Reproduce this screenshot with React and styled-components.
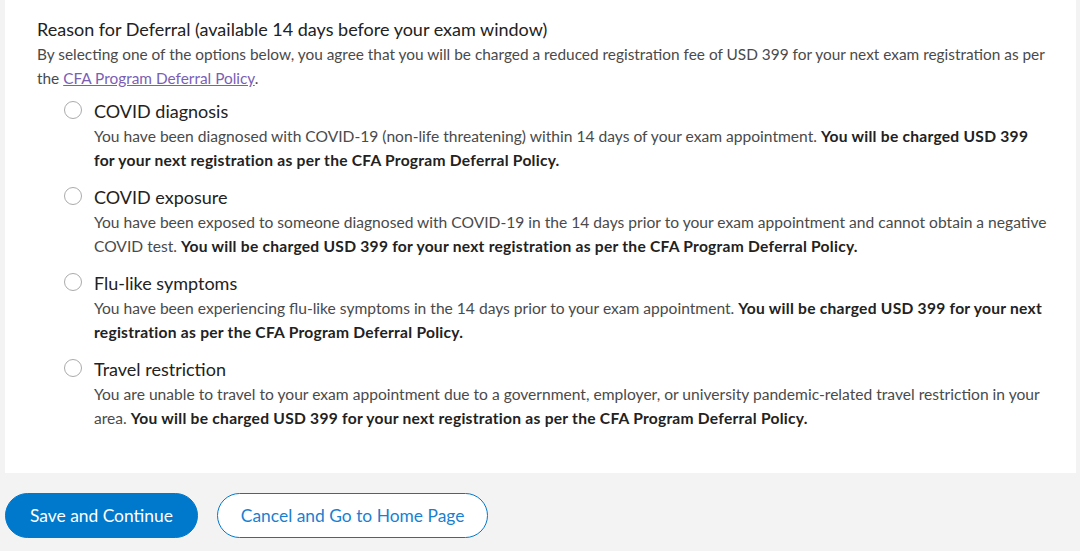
import React from "react";
import styled, { createGlobalStyle } from "styled-components";

const GlobalStyle = createGlobalStyle`
  html, body {
    margin: 0;
    padding: 0;
    background: #f3f3f3;
    font-family: Lato, "Open Sans", sans-serif;
  }
`;

const Page = styled.div`
  width: 1080px;
  height: 551px;
  background: #f3f3f3;
  overflow: hidden;
`;

const Panel = styled.section`
  margin-left: 5px;
  width: 1071px;
  box-sizing: border-box;
  background: #fff;
  padding: 17px 28px 43px 32px;
`;

const Heading = styled.h2`
  margin: 0;
  font-size: 18px;
  font-weight: 400;
  line-height: 25px;
  color: #222;
`;

const Intro = styled.p`
  margin: 0;
  font-size: 15.4px;
  line-height: 24px;
  color: #4a4a4a;

  a {
    color: #7a5fb5;
    text-decoration: underline;
  }
`;

const Options = styled.div`
  display: flex;
  flex-direction: column;
  gap: 12px;
  padding-left: 27px;
  margin-top: 8px;
`;

const Option = styled.label`
  display: grid;
  grid-template-columns: 30px 1fr;
  cursor: pointer;
`;

const Radio = styled.span`
  width: 18px;
  height: 18px;
  margin-top: 3px;
  border-radius: 50%;
  border: 1px solid #ababab;
  box-sizing: border-box;
  background: #fff;
`;

const OptionTitle = styled.div`
  font-size: 18px;
  line-height: 26px;
  color: #222;
`;

const OptionText = styled.p`
  grid-column: 2;
  margin: 0;
  font-size: 15.6px;
  line-height: 24px;
  color: #4a4a4a;

  strong {
    color: #222;
    font-weight: 700;
    letter-spacing: 0.25px;
  }
`;

const Actions = styled.div`
  display: flex;
  gap: 19px;
  padding: 20px 0 0 5px;
`;

const Button = styled.button`
  height: 45px;
  box-sizing: border-box;
  border-radius: 23px;
  padding: 0 ${(p) => (p.$primary ? "24px" : "23px")};
  font-family: Lato, "Open Sans", sans-serif;
  font-size: 17.4px;
  cursor: pointer;
  border: 1px solid #0079cc;
  background: ${(p) => (p.$primary ? "#0079cc" : "#fff")};
  color: ${(p) => (p.$primary ? "#fff" : "#1a7fd0")};
`;

const charge = "You will be charged USD 399 for your next registration as per the CFA Program Deferral Policy.";

const reasons = [
  {
    title: "COVID diagnosis",
    text: "You have been diagnosed with COVID-19 (non-life threatening) within 14 days of your exam appointment.",
  },
  {
    title: "COVID exposure",
    text: "You have been exposed to someone diagnosed with COVID-19 in the 14 days prior to your exam appointment and cannot obtain a negative COVID test.",
  },
  {
    title: "Flu-like symptoms",
    text: "You have been experiencing flu-like symptoms in the 14 days prior to your exam appointment.",
  },
  {
    title: "Travel restriction",
    text: "You are unable to travel to your exam appointment due to a government, employer, or university pandemic-related travel restriction in your area.",
  },
];

export default function App() {
  return (
    <Page>
      <GlobalStyle />
      <Panel>
        <Heading>Reason for Deferral (available 14 days before your exam window)</Heading>
        <Intro>
          By selecting one of the options below, you agree that you will be charged a reduced
          registration fee of USD 399 for your next exam registration as per the{" "}
          <a href="#policy">CFA Program Deferral Policy</a>.
        </Intro>
        <Options>
          {reasons.map((r) => (
            <Option key={r.title}>
              <Radio />
              <OptionTitle>{r.title}</OptionTitle>
              <OptionText>
                {r.text} <strong>{charge}</strong>
              </OptionText>
            </Option>
          ))}
        </Options>
      </Panel>
      <Actions>
        <Button $primary>Save and Continue</Button>
        <Button>Cancel and Go to Home Page</Button>
      </Actions>
    </Page>
  );
}
